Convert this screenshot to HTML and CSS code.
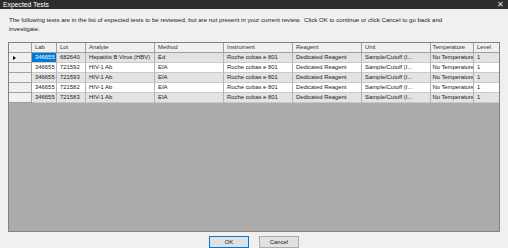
FILE: index.html
```html
<!DOCTYPE html>
<html>
<head>
<meta charset="utf-8">
<link rel="stylesheet" href="styles.css">
</head>
<body>
<div class="win">
  <div class="titlebar">
    <span class="title">Expected Tests</span>
    <span class="close">✕</span>
  </div>
  <div class="content">
    <p class="msg">The following tests are in the list of expected tests to be reviewed, but are not present in your current review.&nbsp; Click OK to continue or click Cancel to go back and investigate.</p>
    <div class="grid">
      <div class="row head">
        <div class="rh"></div>
        <div class="c w-lab">Lab</div>
        <div class="c w-lot">Lot</div>
        <div class="c w-an">Analyte</div>
        <div class="c w-me">Method</div>
        <div class="c w-in">Instrument</div>
        <div class="c w-re">Reagent</div>
        <div class="c w-un">Unit</div>
        <div class="c w-te">Temperature</div>
        <div class="c w-le">Level</div>
      </div>
      <div class="row alt">
        <div class="rh"><span class="arrow"></span></div>
        <div class="c w-lab"><span class="sel">346655</span></div>
        <div class="c w-lot">682640</div>
        <div class="c w-an">Hepatitis B Virus (HBV)</div>
        <div class="c w-me">Ed</div>
        <div class="c w-in">Roche cobas e 801</div>
        <div class="c w-re">Dedicated Reagent</div>
        <div class="c w-un">Sample/Cutoff (I...</div>
        <div class="c w-te">No Temperature</div>
        <div class="c w-le">1</div>
      </div>
      <div class="row">
        <div class="rh"></div>
        <div class="c w-lab">346655</div>
        <div class="c w-lot">721592</div>
        <div class="c w-an">HIV-1 Ab</div>
        <div class="c w-me">EIA</div>
        <div class="c w-in">Roche cobas e 801</div>
        <div class="c w-re">Dedicated Reagent</div>
        <div class="c w-un">Sample/Cutoff (I...</div>
        <div class="c w-te">No Temperature</div>
        <div class="c w-le">1</div>
      </div>
      <div class="row alt">
        <div class="rh"></div>
        <div class="c w-lab">346655</div>
        <div class="c w-lot">721593</div>
        <div class="c w-an">HIV-1 Ab</div>
        <div class="c w-me">EIA</div>
        <div class="c w-in">Roche cobas e 801</div>
        <div class="c w-re">Dedicated Reagent</div>
        <div class="c w-un">Sample/Cutoff (I...</div>
        <div class="c w-te">No Temperature</div>
        <div class="c w-le">1</div>
      </div>
      <div class="row">
        <div class="rh"></div>
        <div class="c w-lab">346655</div>
        <div class="c w-lot">721582</div>
        <div class="c w-an">HIV-1 Ab</div>
        <div class="c w-me">EIA</div>
        <div class="c w-in">Roche cobas e 801</div>
        <div class="c w-re">Dedicated Reagent</div>
        <div class="c w-un">Sample/Cutoff (I...</div>
        <div class="c w-te">No Temperature</div>
        <div class="c w-le">1</div>
      </div>
      <div class="row alt">
        <div class="rh"></div>
        <div class="c w-lab">346655</div>
        <div class="c w-lot">721583</div>
        <div class="c w-an">HIV-1 Ab</div>
        <div class="c w-me">EIA</div>
        <div class="c w-in">Roche cobas e 801</div>
        <div class="c w-re">Dedicated Reagent</div>
        <div class="c w-un">Sample/Cutoff (I...</div>
        <div class="c w-te">No Temperature</div>
        <div class="c w-le">1</div>
      </div>
      <div class="empty"></div>
    </div>
    <div class="buttons">
      <button class="btn">OK</button>
      <button class="btn">Cancel</button>
    </div>
  </div>
</div>
</body>
</html>
```
FILE: styles.css
```css
* { box-sizing: border-box; }
html, body { margin: 0; padding: 0; }
body {
  width: 508px;
  height: 248px;
  overflow: hidden;
  background: #f0f0f0;
  font-family: "Liberation Sans", Arial, sans-serif;
  font-size: 5.9px;
  color: #1a1a1a;
}
.win { width: 508px; height: 248px; display: flex; flex-direction: column; }
.titlebar {
  height: 13px;
  background: #2d2d2d;
  color: #ffffff;
  display: flex;
  align-items: center;
  justify-content: space-between;
  padding: 0 4px 0 3px;
  font-size: 6.8px;
}
.close { font-size: 8px; color: #e0e0e0; }
.content { flex: 1; display: flex; flex-direction: column; padding: 0 8px 0 8px; }
.msg {
  margin: 6px 0 0 1px;
  line-height: 9px;
  width: 446px;
  font-size: 6.1px;
}
.grid {
  margin-top: 9px;
  width: 492px;
  height: 190px;
  border: 1px solid #828282;
  background: #ababab;
  display: flex;
  flex-direction: column;
}
.row { display: flex; height: 10px; background: #ffffff; flex: none; }
.row.alt { background: #e3e3e3; }
.row.head { background: #f0f0f0; }
.rh {
  width: 23px;
  flex: none;
  background: #f0f0f0;
  border-right: 1px solid #a0a0a0;
  border-bottom: 1px solid #a0a0a0;
  display: flex;
  align-items: center;
  padding-left: 4px;
}
.arrow {
  width: 0; height: 0;
  border-top: 2.5px solid transparent;
  border-bottom: 2.5px solid transparent;
  border-left: 3px solid #000;
}
.c {
  flex: none;
  border-right: 1px solid #a0a0a0;
  border-bottom: 1px solid #a0a0a0;
  padding-left: 3px;
  line-height: 9px;
  white-space: nowrap;
  overflow: hidden;
}
.head .c { color: #333; }
.w-lab { width: 25px; }
.w-lot { width: 29px; }
.w-an { width: 69px; }
.w-me { width: 69px; }
.w-in { width: 69px; }
.w-re { width: 69px; }
.w-un { width: 69px; }
.w-te { width: 43px; padding-left: 1.5px; letter-spacing: -0.05px; }
.w-le { width: 25px; border-right: none; }
.row:not(.head) .c { border-bottom-color: #c8c8c8; border-right-color: #b4b4b4; }
.sel { background: #0078d7; color: #fff; margin-left: -3px; padding-left: 3px; display: block; }
.empty { flex: 1; }
.buttons {
  display: flex;
  justify-content: center;
  gap: 10px;
  margin-top: 4px;
}
.btn {
  width: 40px;
  height: 12px;
  padding: 0;
  border: 1px solid #adadad;
  background: #e1e1e1;
  font-family: inherit;
  font-size: 5.9px;
  color: #1a1a1a;
}
.btn:first-child { border-color: #0078d7; }
```
